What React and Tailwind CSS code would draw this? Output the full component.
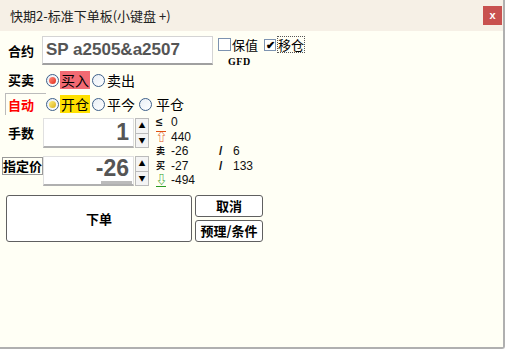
import React from 'react';

const CJK = { fontFamily: '"Noto Sans CJK SC", "Liberation Sans", sans-serif' };
const SANS = { fontFamily: '"Liberation Sans", "Noto Sans CJK SC", sans-serif' };

function Radio({ color }) {
  return (
    <span className="w-[13px] h-[13px] rounded-full border border-[#3d5f8a] bg-gradient-to-br from-[#e8eef5] to-white flex items-center justify-center shrink-0">
      {color && <span className={`w-[7px] h-[7px] rounded-full ${color}`} />}
    </span>
  );
}

function Spinner() {
  return (
    <div className="flex flex-col w-[14px] h-full ml-[1px]">
      <div className="flex-1 border border-[#bbb] bg-[#f4f4f4] flex items-center justify-center text-[7px] leading-none text-black">▲</div>
      <div className="flex-1 border border-[#bbb] border-t-0 bg-[#f4f4f4] flex items-center justify-center text-[7px] leading-none text-black">▼</div>
    </div>
  );
}

export default function App() {
  return (
    <div className="w-[505px] h-[349px] bg-[#fffff5] border-r-2 border-b-2 border-[#b0b0b0] rounded-br-[3px] flex flex-col overflow-hidden" style={CJK}>
      {/* Title bar */}
      <div className="h-[31px] bg-[#f6f0e6] flex items-center justify-between pl-[10px] pr-[1px] shrink-0">
        <span className="text-[13px] text-[#222]">快期2-标准下单板(小键盘 +)</span>
        <div className="w-[19px] h-[19px] bg-[#c8514f] flex items-center justify-center text-white text-[11px] font-bold leading-none" style={SANS}>x</div>
      </div>

      {/* Contract */}
      <div className="flex items-start mt-[5px]">
        <div className="w-[42px] pl-[8px] pt-[5px] text-[13px] font-bold text-black">合约</div>
        <div className="w-[171px] h-[29px] bg-white border border-[#d4d4d4] border-b-2 border-b-[#a0a0a0] flex items-center pl-[3px] text-[17px] font-bold text-[#555]" style={SANS}>
          SP a2505&amp;a2507
        </div>
        <div className="flex flex-col ml-[5px]">
          <div className="flex items-center">
            <span className="w-[13px] h-[13px] border border-[#7d93b0] bg-white" />
            <span className="text-[13px] ml-[1px] text-black leading-[15px]">保值</span>
            <span className="w-[12px] h-[12px] border border-[#7d93b0] bg-white ml-[6px] flex items-center justify-center text-[11px] font-bold leading-none">✔</span>
            <span className="text-[13px] ml-[1px] text-black leading-[15px] border border-dotted border-[#555]">移仓</span>
          </div>
          <span className="text-[10px] font-bold ml-[10px] mt-[1px] text-black tracking-[0.5px]" style={{ fontFamily: '"Liberation Serif", serif' }}>GFD</span>
        </div>
      </div>

      {/* Buy / Sell */}
      <div className="flex items-center mt-[2px] h-[18px]">
        <div className="w-[46px] pl-[8px] text-[13px] font-bold text-black">买卖</div>
        <Radio color="bg-gradient-to-br from-[#ff8a7a] to-[#e02010]" />
        <span className="ml-[1px] px-[1px] bg-[#f26a73] text-[14px] text-black leading-[18px]">买入</span>
        <span className="ml-[2px]"><Radio /></span>
        <span className="ml-[2px] text-[14px] text-black">卖出</span>
      </div>

      {/* Open / Close */}
      <div className="flex items-center mt-[4px] h-[22px]">
        <div className="w-[41px] ml-[5px] h-[22px] border-l border-t border-[#bbb] flex items-center pl-[2px] text-[13px] font-bold text-[#f00]">自动</div>
        <Radio color="bg-gradient-to-br from-[#fff07a] to-[#d8b000]" />
        <span className="ml-[1px] px-[1px] bg-[#ffe000] text-[14px] text-black leading-[18px]">开仓</span>
        <span className="ml-[2px]"><Radio /></span>
        <span className="ml-[2px] text-[14px] text-black">平今</span>
        <span className="ml-[4px]"><Radio /></span>
        <span className="ml-[4px] text-[14px] text-black">平仓</span>
      </div>

      {/* Quantity + price + info */}
      <div className="flex mt-[3px]">
        <div className="flex flex-col">
          <div className="flex items-center h-[30px]">
            <div className="w-[43px] pl-[8px] text-[13px] font-bold text-black">手数</div>
            <div className="w-[91px] h-full bg-white border border-[#e0e0e0] border-b-2 border-b-[#b0b0b0] flex items-center justify-end pr-[4px] text-[23px] font-bold text-[#555]" style={SANS}>1</div>
            <Spinner />
          </div>
          <div className="flex items-center h-[30px] mt-[8px]">
            <div className="w-[41px] ml-[2px] h-[18px] border border-[#999] flex items-center justify-center text-[13px] font-bold text-black self-start mt-[1px]">指定价</div>
            <div className="w-[91px] h-full bg-white border border-[#e0e0e0] border-b-2 border-b-[#b0b0b0] flex flex-col items-end justify-center pr-[1px] text-[23px] font-bold text-[#555] leading-none" style={SANS}>
              <span className="pr-[3px]">-26</span>
              <span className="w-[31px] h-[3px] bg-[#bbb] mt-[1px]" />
            </div>
            <Spinner />
          </div>
        </div>

        <div className="ml-[7px] flex flex-col text-[12px] leading-[14.6px] text-[#111] -mt-[3px]" style={SANS}>
          <div className="flex"><span className="w-[15px] font-bold">≤</span><span>0</span></div>
          <div className="flex items-center"><span className="text-[#e05010] text-[11px] leading-none font-bold border-t border-[#e05010] w-[10px] mr-[5px] text-center">⇧</span><span>440</span></div>
          <div className="flex"><span className="w-[15px] text-[9px] font-bold" style={CJK}>卖</span><span className="w-[48px]">-26</span><span className="w-[14px] font-bold">/</span><span>6</span></div>
          <div className="flex"><span className="w-[15px] text-[9px] font-bold" style={CJK}>买</span><span className="w-[48px]">-27</span><span className="w-[14px] font-bold">/</span><span>133</span></div>
          <div className="flex items-center"><span className="text-[#2a9a20] text-[11px] leading-none font-bold border-b border-[#2a9a20] w-[10px] mr-[5px] text-center">⇩</span><span>-494</span></div>
        </div>
      </div>

      {/* Buttons */}
      <div className="flex mt-[7px] ml-[6px]">
        <div className="w-[186px] h-[47px] bg-white border border-[#606060] rounded-[3px] flex items-center justify-center text-[13px] font-bold text-black">下单</div>
        <div className="flex flex-col ml-[3px] gap-[3px]">
          <div className="w-[68px] h-[22px] bg-white border border-[#606060] rounded-[3px] flex items-center justify-center text-[13px] font-bold text-black">取消</div>
          <div className="w-[68px] h-[22px] bg-white border border-[#606060] rounded-[3px] flex items-center justify-center text-[13px] font-bold text-black">预理/条件</div>
        </div>
      </div>
    </div>
  );
}
